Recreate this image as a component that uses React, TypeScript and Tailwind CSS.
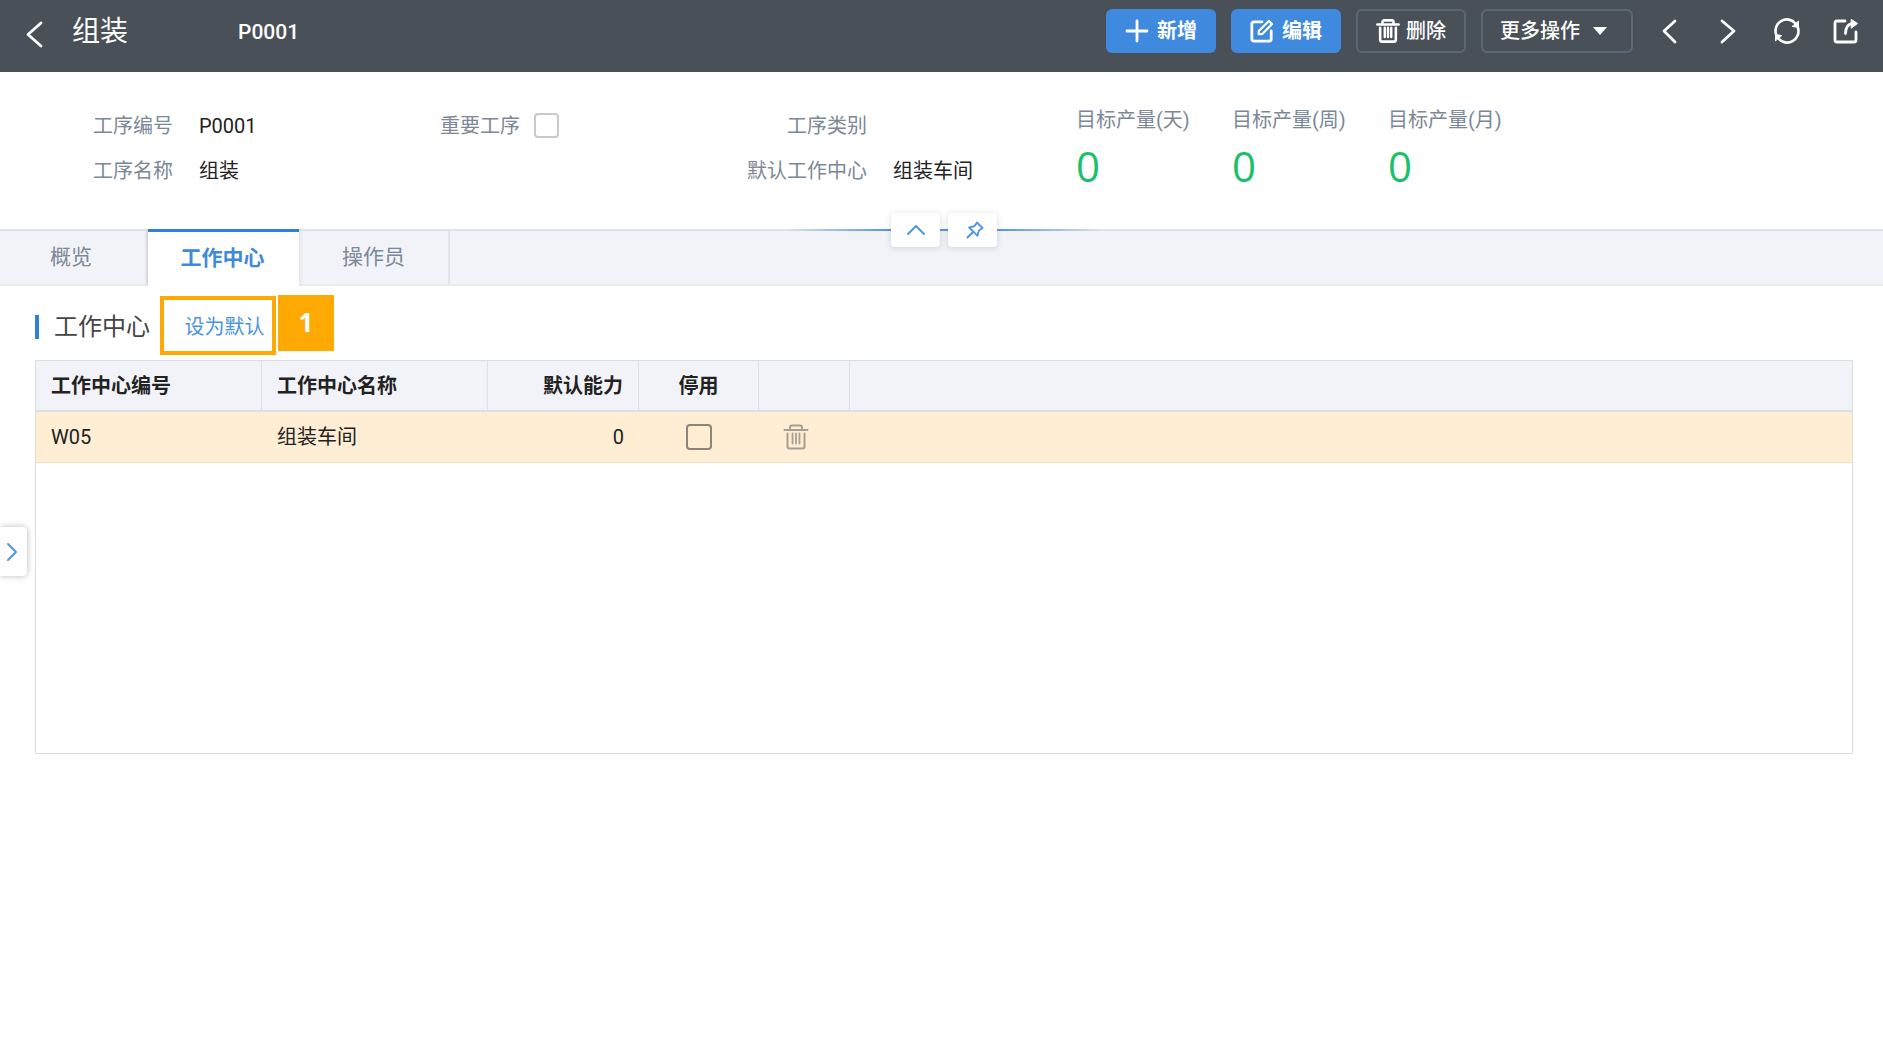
import React, { useState } from 'react';
import clsx from 'clsx';

type IconProps = { className?: string };

const strokeProps = {
  fill: 'none',
  stroke: 'currentColor',
  strokeLinecap: 'round',
  strokeLinejoin: 'round',
} as const;

function ChevronIcon({ className, d, width = 2 }: IconProps & { d: string; width?: number }) {
  return (
    <svg viewBox="0 0 28 28" className={className} {...strokeProps} strokeWidth={width} aria-hidden="true">
      <path d={d} />
    </svg>
  );
}

function PlusIcon({ className }: IconProps) {
  return (
    <svg viewBox="0 0 24 24" className={className} {...strokeProps} strokeWidth="2.8" aria-hidden="true">
      <path d="M12 2v20M2 12h20" />
    </svg>
  );
}

function EditIcon({ className }: IconProps) {
  return (
    <svg viewBox="0 0 26 26" className={className} {...strokeProps} strokeWidth="3" aria-hidden="true">
      <path d="M13 3H4.500Q2 3 2 5.500V21.500Q2 24 4.500 24H20.500Q23 24 23 21.500V13" />
      <path d="M9.500 16.500V13L20.500 2.200L23.800 5.500L13 16.500Z" strokeWidth="2.4" />
    </svg>
  );
}

function TrashIcon({ className, width = 2 }: IconProps & { width?: number }) {
  return (
    <svg viewBox="0 0 26 26" className={className} {...strokeProps} strokeWidth={width} aria-hidden="true">
      <path d="M1.500 6H24.500M7 5.500V3.500Q7 1.500 9 1.500H17Q19 1.500 19 3.500V5.500" />
      <path d="M4.500 9.500V22.500Q4.500 24.500 6.500 24.500H19.500Q21.500 24.500 21.500 22.500V9.500" />
      <path d="M9.500 9.500V19.500M13 9.500V19.500M16.500 9.500V19.500" strokeWidth={width - 0.2} />
    </svg>
  );
}

function RefreshIcon({ className }: IconProps) {
  return (
    <svg viewBox="0 0 26 26" className={className} {...strokeProps} strokeWidth="2.6" aria-hidden="true">
      <path d="M2 16A11.300 11.300 0 0 1 21.500 5.500M24 10A11.300 11.300 0 0 1 4.500 20.500" />
      <path d="M24.500 3.500V9.500L18.500 8.500ZM1.500 22.500V16.500L7.500 17.500Z" fill="currentColor" strokeWidth="1" />
    </svg>
  );
}

function ExportIcon({ className }: IconProps) {
  return (
    <svg viewBox="0 0 26 26" className={className} {...strokeProps} strokeWidth="2.8" aria-hidden="true">
      <path d="M12 3H4Q2 3 2 5V22Q2 24 4 24H21Q23 24 23 22V14" />
      <path d="M12.500 15.500Q12.500 6.500 19.500 5.500" />
      <path d="M18.500 1.500L24.500 5.500L18.500 10Z" fill="currentColor" strokeWidth="1" />
    </svg>
  );
}

function PinIcon({ className }: IconProps) {
  return (
    <svg viewBox="0 0 18 18" className={className} {...strokeProps} strokeWidth="1.9" aria-hidden="true">
      <path d="M11 1.500L16.500 7L14.300 8.500Q12.500 9.500 12.300 11.500L11.500 14.800L3.200 6.500L6.500 5.700Q8.500 5.500 9.500 3.700Z" />
      <path d="M6.500 11.500L1.500 16.500" />
    </svg>
  );
}

const tabs = [
  { key: 'overview', label: '概览' },
  { key: 'center', label: '工作中心' },
  { key: 'operator', label: '操作员' },
];

const targets = [
  { label: '目标产量(天)', value: 0 },
  { label: '目标产量(周)', value: 0 },
  { label: '目标产量(月)', value: 0 },
];

const centers = [{ code: 'W05', name: '组装车间', capacity: 0, disabled: false }];

function Field({ label, value }: { label: string; value?: string }) {
  return (
    <div className="flex h-[45px] items-center gap-[26px]">
      <dt className="w-[148px] shrink-0 text-right text-[#7c8797]">{label}</dt>
      <dd className="text-[#222]">{value}</dd>
    </div>
  );
}

function TopBar() {
  const solid = 'flex h-11 w-[110px] items-center justify-center gap-2 rounded-md bg-[#3f8ade] font-bold';
  const ghost = 'flex h-11 items-center rounded-md border-2 border-[#5a6876] font-medium';
  const iconButton = 'flex h-11 w-[59px] items-center justify-center';
  return (
    <header className="flex h-[72px] items-start justify-between bg-[#4a5057] pr-2 text-white">
      <div className="flex h-16 items-center">
        <button aria-label="返回" className="ml-5 mt-1">
          <ChevronIcon className="size-7" d="M21 3L8 14.500L21 26" width={2.8} />
        </button>
        <h1 className="ml-6 w-[166px] text-[28px] leading-8">组装</h1>
        <span className="text-[21px] font-medium">P0001</span>
      </div>
      <div className="flex items-center pt-[9px]">
        <div className="mr-1.5 flex gap-[15px]">
          <button className={solid}>
            <PlusIcon className="size-6" />
            新增
          </button>
          <button className={solid}>
            <EditIcon className="size-6" />
            编辑
          </button>
          <button className={clsx(ghost, 'w-[110px] justify-center gap-1.5')}>
            <TrashIcon className="size-6" width={2.8} />
            删除
          </button>
          <button className={clsx(ghost, 'w-[152px] gap-[13px] pl-[17px]')}>
            更多操作
            <svg viewBox="0 0 14 8" className="h-2 w-3.5" fill="currentColor" aria-hidden="true">
              <path d="M0 0h14L7 8z" />
            </svg>
          </button>
        </div>
        <button aria-label="上一条" className={iconButton}>
          <ChevronIcon className="size-7" d="M20 4L9 14L20 25" width={2.8} />
        </button>
        <button aria-label="下一条" className={iconButton}>
          <ChevronIcon className="size-7" d="M8 4L20 14L8 25" width={2.8} />
        </button>
        <button aria-label="刷新" className={iconButton}>
          <RefreshIcon className="size-[26px]" />
        </button>
        <button aria-label="打开新窗口" className={iconButton}>
          <ExportIcon className="size-[26px]" />
        </button>
      </div>
    </header>
  );
}

function Summary() {
  const toggle = 'flex h-[34px] w-[49px] items-center justify-center rounded bg-white text-[#4f95e4] shadow-[0_1px_6px_rgba(0,0,0,0.15)]';
  return (
    <section className="relative border-b-2 border-[#e0e3ea] pb-9 pt-[31px]">
      <div className="grid grid-cols-[repeat(3,minmax(0,347px))_auto] pl-[25px]">
        <dl>
          <Field label="工序编号" value="P0001" />
          <Field label="工序名称" value="组装" />
        </dl>
        <div className="flex h-[45px] items-center gap-3.5">
          <label htmlFor="important" className="w-[148px] text-right text-[#7c8797]">重要工序</label>
          <input
            id="important"
            type="checkbox"
            className="size-[25px] appearance-none rounded border-2 border-[#c9c9c9] bg-white checked:bg-[#3f8ade]"
          />
        </div>
        <dl>
          <Field label="工序类别" />
          <Field label="默认工作中心" value="组装车间" />
        </dl>
        <dl className="flex pl-[10px]">
          {targets.map((target) => (
            <div key={target.label} className="w-[156px] pt-1">
              <dt className="leading-[26px] text-[#7c8797]">{target.label}</dt>
              <dd className="mt-2 font-['Open_Sans'] text-[42px] leading-[50px] text-[#1bc06a]">{target.value}</dd>
            </div>
          ))}
        </dl>
      </div>
      <div className="absolute inset-x-0 -bottom-[18px] flex h-[34px] items-center justify-center pl-[5px]">
        <div className="flex w-[320px] items-center">
          <div className="h-0.5 flex-1 bg-linear-to-r from-transparent to-[#4f95e4]" />
          <button aria-label="收起" className={toggle}>
            <ChevronIcon className="size-7" d="M6 18L14 10L22 18" />
          </button>
          <div className="h-0.5 w-2 bg-[#4f95e4]" />
          <button aria-label="固定" className={clsx(toggle, 'pl-1')}>
            <PinIcon className="size-[18px]" />
          </button>
          <div className="h-0.5 flex-1 bg-linear-to-l from-transparent to-[#4f95e4]" />
        </div>
      </div>
    </section>
  );
}

function CenterTable() {
  const th = 'h-[51px] border-b-2 border-r border-[#dcdfe7] px-[15px] font-bold';
  const td = 'h-[51px] border-b border-[#f3e1c8] px-[15px]';
  return (
    <div className="ml-[35px] mr-[30px] min-h-[394px] border border-[#d9dde6]">
      <table className="w-full table-fixed border-separate border-spacing-0 text-[#222]">
        <colgroup>
          <col className="w-[226px]" />
          <col className="w-[226px]" />
          <col className="w-[151px]" />
          <col className="w-[120px]" />
          <col className="w-[91px]" />
          <col />
        </colgroup>
        <thead className="bg-[#f2f3f8]">
          <tr>
            <th className={clsx(th, 'text-left')}>工作中心编号</th>
            <th className={clsx(th, 'text-left')}>工作中心名称</th>
            <th className={clsx(th, 'text-right')}>默认能力</th>
            <th className={clsx(th, 'text-center')}>停用</th>
            <th className={th} />
            <th className="border-b-2 border-[#dcdfe7]" />
          </tr>
        </thead>
        <tbody>
          {centers.map((row) => (
            <tr key={row.code} className="bg-[#ffedd4]">
              <td className={td}>{row.code}</td>
              <td className={td}>{row.name}</td>
              <td className={clsx(td, 'text-right')}>{row.capacity}</td>
              <td className={td}>
                <input
                  type="checkbox"
                  aria-label="停用"
                  defaultChecked={row.disabled}
                  className="mx-auto block size-[26px] appearance-none rounded border-2 border-[#8b857e] checked:bg-[#3f8ade]"
                />
              </td>
              <td className={td}>
                <button aria-label="删除" className="mx-auto block w-fit pr-[18px] text-[#a59e93]">
                  <TrashIcon className="size-[26px]" />
                </button>
              </td>
              <td className={td} />
            </tr>
          ))}
        </tbody>
      </table>
    </div>
  );
}

export default function App() {
  const [active, setActive] = useState('center');

  return (
    <div className="relative min-h-screen bg-white font-[Roboto,'Noto_Sans_CJK_SC',sans-serif] text-[20px] leading-7">
      <TopBar />
      <Summary />
      <nav className="flex h-[55px] border-b-2 border-[#e9ebf0] bg-[#f2f3f8] text-[21px]">
        {tabs.map((tab) => (
          <button
            key={tab.key}
            onClick={() => setActive(tab.key)}
            className={clsx(
              tab.key === 'overview' ? 'w-[148px] pr-1' : 'w-[151px]',
              active === tab.key
                ? 'relative -mb-0.5 -mt-0.5 border-t-[3px] border-[#2f80dd] bg-white pb-[3px] pr-0.5 font-bold text-[#3f8ade] shadow-[0_0_5px_rgba(0,0,0,0.12)] [clip-path:inset(0_-6px_0_-6px)]'
                : 'border-r-2 border-[#e1e4eb] pb-0.5 text-[#7c8797]',
            )}
          >
            {tab.label}
          </button>
        ))}
      </nav>
      <main>
        <div className="flex h-[74px] items-start pl-[35px] pt-[10px]">
          <div className="flex h-[59px] w-[125px] items-center gap-[15px] pt-0.5">
            <span className="h-6 w-1 bg-[#2f80dd]" />
            <h2 className="whitespace-nowrap text-[24px] text-[#444]">工作中心</h2>
          </div>
          <button className="h-[59px] w-[116px] border-4 border-[#ffaa04] pl-[13px] pt-0.5 text-[#4a92e4]">设为默认</button>
          <span className="-mt-px ml-0.5 flex size-14 items-center justify-center bg-[#ffaa04] pb-0.5 font-['Open_Sans'] text-[26px] font-bold text-white">
            1
          </span>
        </div>
        <CenterTable />
      </main>
      <button
        aria-label="展开侧栏"
        className="absolute left-0 top-[527px] flex h-[49px] w-[27px] items-center justify-center rounded-r bg-white pr-1 text-[#4f95e4] shadow-[0_0_6px_rgba(0,0,0,0.28)]"
      >
        <ChevronIcon className="size-7 shrink-0" d="M10 6L18 14L10 22" />
      </button>
    </div>
  );
}
